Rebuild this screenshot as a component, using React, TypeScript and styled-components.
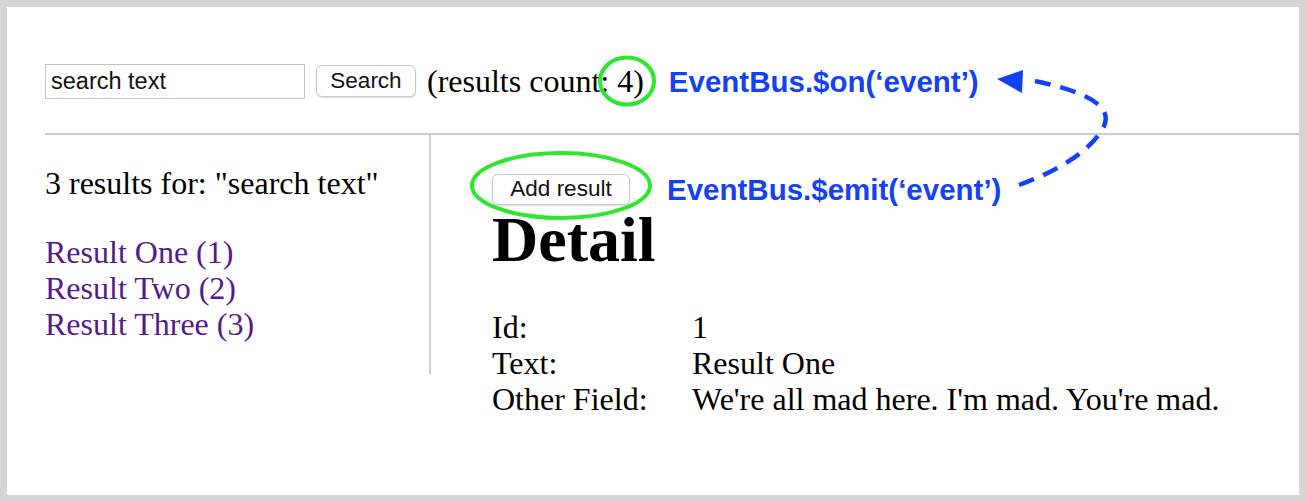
import React from "react";
import styled, { createGlobalStyle } from "styled-components";

const GlobalStyle = createGlobalStyle`
  html, body { margin: 0; padding: 0; background: #ffffff; }
  body { font-family: "Liberation Serif", "Times New Roman", serif; color: #000; }
  * { box-sizing: border-box; }
`;

const Frame = styled.div`
  position: relative;
  width: 1306px;
  height: 502px;
  border: 7px solid #d6d6d6;
  background: #fff;
  padding-left: 38px;
  overflow: hidden;
`;

const Header = styled.div`
  display: flex;
  align-items: center;
  padding-top: 56px;
  padding-bottom: 34px;
  border-bottom: 2px solid #cccccc;
`;

const SearchInput = styled.input`
  width: 260px;
  height: 35px;
  padding: 0 5px;
  border: 1px solid #c3c3c3;
  border-radius: 0;
  font-family: "Liberation Sans", Arial, sans-serif;
  font-size: 23.5px;
  color: #111;
  outline: none;
`;

const Button = styled.button<{ $w: number; $h: number }>`
  width: ${(p) => p.$w}px;
  height: ${(p) => p.$h}px;
  padding: 0;
  background: #fff;
  border: 1px solid #c9c9c9;
  border-radius: 6px;
  box-shadow: 0 1px 1.5px rgba(0, 0, 0, 0.14);
  font-family: "Liberation Sans", Arial, sans-serif;
  font-size: 22.5px;
  color: #111;
`;

const Count = styled.span`
  font-size: 32px;
  line-height: 36px;
  margin-left: 11px;
  white-space: nowrap;
`;

const BusLabel = styled.span<{ $gap: number }>`
  margin-left: ${(p) => p.$gap}px;
  margin-top: 2px;
  font-family: "Liberation Sans", Arial, sans-serif;
  font-weight: 700;
  font-size: 29.5px;
  color: #1541f4;
  white-space: nowrap;
`;

const Body = styled.div`
  display: flex;
`;

const LeftCol = styled.div`
  width: 386px;
  height: 239px;
  border-right: 2px solid #cccccc;
  font-size: 32px;
  line-height: 36px;
`;

const Summary = styled.p`
  margin: 30px 0 0;
`;

const ResultList = styled.ul`
  list-style: none;
  margin: 33px 0 0;
  padding: 0;
`;

const ResultLink = styled.a`
  color: #551a8b;
  text-decoration: none;
`;

const RightCol = styled.div`
  padding-left: 61px;
  padding-top: 36px;
`;

const Actions = styled.div`
  display: flex;
  align-items: center;
`;

const Title = styled.h1`
  margin: 0;
  font-size: 64px;
  line-height: 66px;
  font-weight: 700;
`;

const Fields = styled.div`
  display: grid;
  grid-template-columns: 200px auto;
  margin-top: 36px;
  font-size: 32px;
  line-height: 36px;
`;

const Overlay = styled.svg`
  position: absolute;
  left: -7px;
  top: -7px;
  width: 1306px;
  height: 502px;
  pointer-events: none;
`;

export default function App() {
  return (
    <>
      <GlobalStyle />
      <Frame>
        <Header>
          <SearchInput defaultValue="search text" />
          <Button $w={100} $h={32} style={{ marginLeft: 11 }}>Search</Button>
          <Count>(results count: 4)</Count>
          <BusLabel $gap={25}>EventBus.$on(‘event’)</BusLabel>
        </Header>
        <Body>
          <LeftCol>
            <Summary>3 results for: "search text"</Summary>
            <ResultList>
              <li><ResultLink href="#">Result One (1)</ResultLink></li>
              <li><ResultLink href="#">Result Two (2)</ResultLink></li>
              <li><ResultLink href="#">Result Three (3)</ResultLink></li>
            </ResultList>
          </LeftCol>
          <RightCol>
            <Actions>
              <Button $w={138} $h={31}>Add result</Button>
              <BusLabel $gap={37}>EventBus.$emit(‘event’)</BusLabel>
            </Actions>
            <Title>Detail</Title>
            <Fields>
              <span>Id:</span>
              <span>1</span>
              <span>Text:</span>
              <span>Result One</span>
              <span>Other Field:</span>
              <span>We're all mad here. I'm mad. You're mad.</span>
            </Fields>
          </RightCol>
        </Body>
        <Overlay viewBox="0 0 1306 502">
          <ellipse cx="627" cy="81" rx="27" ry="23.5" fill="none" stroke="#30e530" strokeWidth="4" />
          <ellipse cx="561" cy="185.5" rx="89" ry="32.5" fill="none" stroke="#30e530" strokeWidth="4" />
          <path
            d="M1019 185 C1060 170 1092 150 1104 126 C1114 104 1080 90 1030 80"
            fill="none"
            stroke="#1541f4"
            strokeWidth="4.5"
            strokeDasharray="16 10"
          />
          <polygon points="997,79 1023,70 1022,93" fill="#1541f4" />
        </Overlay>
      </Frame>
    </>
  );
}
